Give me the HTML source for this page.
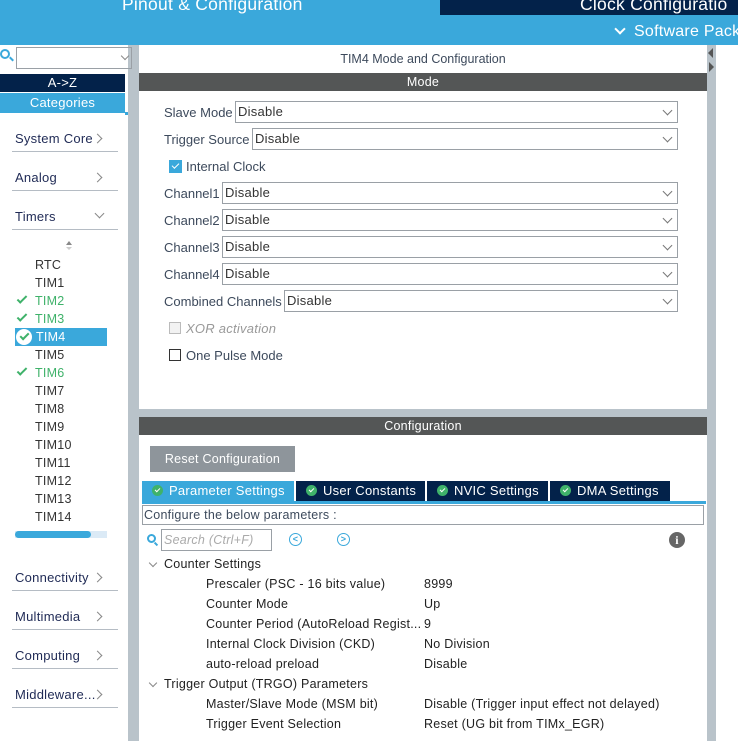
<!DOCTYPE html>
<html><head><meta charset="utf-8"><style>
*{margin:0;padding:0;box-sizing:border-box}
body{width:738px;height:741px;overflow:hidden;background:#fff;font-family:"Liberation Sans",sans-serif;font-size:13px;color:#333;position:relative;letter-spacing:0.25px}
.a{position:absolute;white-space:nowrap}
.sel{position:absolute;height:22px;border:1px solid #9aa0a6;background:#fff;padding-left:2px;line-height:20px;color:#333}
.sel:after{content:"";position:absolute;right:6px;top:5px;width:6px;height:6px;border-right:1px solid #777;border-bottom:1px solid #777;transform:rotate(45deg)}
.lbl{color:#3d4a5c;letter-spacing:0}
.nav{position:absolute;left:12px;width:106px;height:1px;background:#b5bcc4}
.navt{position:absolute;left:15px;color:#1f2a55;font-size:13px}
.chev{position:absolute;width:7px;height:7px;border-right:1px solid #888;border-bottom:1px solid #888}
.tim{position:absolute;left:35px;font-size:12.5px;color:#333}
.g{color:#3fb26a}
.ck{position:absolute;left:17px;width:10px;height:5px;border-left:2px solid #3fb26a;border-bottom:2px solid #3fb26a;transform:rotate(-45deg)}
.tab{position:absolute;top:481px;height:20px;background:#03224a;color:#fff;line-height:20px;font-size:13px;padding-left:10px}
.tab i{display:inline-block;width:11px;height:11px;border-radius:50%;background:#3fb26a;margin-right:6px;vertical-align:-1px;position:relative}
.tab i:after{content:"";position:absolute;left:3px;top:2.5px;width:4px;height:2px;border-left:1.5px solid #fff;border-bottom:1.5px solid #fff;transform:rotate(-45deg)}
.p{position:absolute;font-size:12.5px;color:#222}
</style></head><body>
<div class="a" style="left:0;top:0;width:738px;height:45px;background:#3aa8db"></div>
<div class="a" style="left:440px;top:0;width:298px;height:15px;background:#03224a"></div>
<div class="a" style="left:122px;top:-6px;color:#fff;font-size:17.5px">Pinout &amp; Configuration</div>
<div class="a" style="left:580px;top:-6px;color:#fff;font-size:17.5px">Clock Configuratio</div>
<div class="a" style="left:616px;top:25px;width:8px;height:8px;border-right:2px solid #fff;border-bottom:2px solid #fff;transform:rotate(45deg)"></div>
<div class="a" style="left:634px;top:23px;color:#fff;font-size:16px">Software Pack</div>

<div class="a" style="left:128px;top:45px;width:11px;height:696px;background:#b9c3ca"></div>
<div class="a" style="left:707px;top:45px;width:9px;height:696px;background:#b9c3ca"></div>
<div class="a" style="left:708px;top:48px;width:0;height:0;border-top:5px solid transparent;border-bottom:5px solid transparent;border-right:5px solid #555"></div>
<div class="a" style="left:709px;top:62px;width:0;height:0;border-top:5px solid transparent;border-bottom:5px solid transparent;border-left:5px solid #555"></div>
<div class="a" style="left:139px;top:409px;width:568px;height:8px;background:#b9c3ca"></div>

<div class="a" style="left:0;top:49px;width:10px;height:10px;border:2px solid #3aa8db;border-radius:50%"></div>
<div class="a" style="left:9px;top:58px;width:5px;height:2px;background:#3aa8db;transform:rotate(45deg)"></div>
<div class="a" style="left:16px;top:47px;width:116px;height:22px;border:1px solid #9aa0a6"></div>
<div class="a" style="left:122px;top:53px;width:6px;height:6px;border-right:1px solid #888;border-bottom:1px solid #888;transform:rotate(45deg)"></div>
<div class="a" style="left:0;top:74px;width:125px;height:18px;background:#03224a;color:#fff;text-align:center;line-height:18px;font-size:13px">A-&gt;Z</div>
<div class="a" style="left:0;top:93px;width:125px;height:20px;background:#3aa8db;color:#fff;text-align:center;line-height:19px;font-size:13px">Categories</div>
<div class="a" style="left:125px;top:112px;width:3px;height:3px;background:#3aa8db"></div>

<div class="navt" style="top:131px">System Core</div><div class="chev" style="left:94px;top:135px;transform:rotate(-45deg)"></div><div class="nav" style="top:151px"></div>
<div class="navt" style="top:170px">Analog</div><div class="chev" style="left:94px;top:174px;transform:rotate(-45deg)"></div><div class="nav" style="top:190px"></div>
<div class="navt" style="top:209px">Timers</div><div class="chev" style="left:96px;top:210px;transform:rotate(45deg)"></div><div class="nav" style="top:229px"></div>
<div class="a" style="left:66px;top:241px;border-left:3px solid transparent;border-right:3px solid transparent;border-bottom:4px solid #888"></div>
<div class="a" style="left:66px;top:247px;border-left:3px solid transparent;border-right:3px solid transparent;border-top:3px solid #ccc"></div>
<div class="tim" style="top:258px">RTC</div>
<div class="tim" style="top:276px">TIM1</div>
<div class="ck" style="top:296px"></div><div class="tim g" style="top:294px">TIM2</div>
<div class="ck" style="top:314px"></div><div class="tim g" style="top:312px">TIM3</div>
<div class="a" style="left:15px;top:328px;width:92px;height:18px;background:#3aa8db"></div>
<div class="a" style="left:16px;top:329px;width:16px;height:16px;border-radius:50%;background:#fff"></div>
<div class="a" style="left:20px;top:333px;width:9px;height:5px;border-left:2px solid #3fb26a;border-bottom:2px solid #3fb26a;transform:rotate(-45deg)"></div>
<div class="tim" style="top:330px;left:36px;color:#fff">TIM4</div>
<div class="tim" style="top:348px">TIM5</div>
<div class="ck" style="top:368px"></div><div class="tim g" style="top:366px">TIM6</div>
<div class="tim" style="top:384px">TIM7</div>
<div class="tim" style="top:402px">TIM8</div>
<div class="tim" style="top:420px">TIM9</div>
<div class="tim" style="top:438px">TIM10</div>
<div class="tim" style="top:456px">TIM11</div>
<div class="tim" style="top:474px">TIM12</div>
<div class="tim" style="top:492px">TIM13</div>
<div class="tim" style="top:510px">TIM14</div>
<div class="a" style="left:15px;top:531px;width:92px;height:7px;background:#dbeaf6"></div>
<div class="a" style="left:15px;top:531px;width:76px;height:7px;background:#3aa8db;border-radius:4px"></div>
<div class="navt" style="top:570px">Connectivity</div><div class="chev" style="left:94px;top:574px;transform:rotate(-45deg)"></div><div class="nav" style="top:590px"></div>
<div class="navt" style="top:609px">Multimedia</div><div class="chev" style="left:94px;top:613px;transform:rotate(-45deg)"></div><div class="nav" style="top:629px"></div>
<div class="navt" style="top:648px">Computing</div><div class="chev" style="left:94px;top:652px;transform:rotate(-45deg)"></div><div class="nav" style="top:668px"></div>
<div class="navt" style="top:687px">Middleware...</div><div class="chev" style="left:94px;top:691px;transform:rotate(-45deg)"></div><div class="nav" style="top:707px"></div>

<div class="a lbl" style="left:139px;top:52px;width:568px;text-align:center;font-size:12.5px">TIM4 Mode and Configuration</div>
<div class="a" style="left:139px;top:73px;width:568px;height:18px;background:#545656;color:#fff;text-align:center;line-height:18px;font-size:12.5px">Mode</div>
<div class="a lbl" style="left:164px;top:105px">Slave Mode</div><div class="sel" style="left:235px;top:101px;width:443px">Disable</div>
<div class="a lbl" style="left:164px;top:132px">Trigger Source</div><div class="sel" style="left:252px;top:128px;width:426px">Disable</div>
<div class="a" style="left:169px;top:160px;width:13px;height:13px;background:#3aa8db"></div>
<div class="a" style="left:172px;top:163px;width:7px;height:4px;border-left:1.5px solid #fff;border-bottom:1.5px solid #fff;transform:rotate(-45deg)"></div>
<div class="a lbl" style="left:186px;top:159px">Internal Clock</div>
<div class="a lbl" style="left:164px;top:186px">Channel1</div><div class="sel" style="left:222px;top:182px;width:456px">Disable</div>
<div class="a lbl" style="left:164px;top:213px">Channel2</div><div class="sel" style="left:222px;top:209px;width:456px">Disable</div>
<div class="a lbl" style="left:164px;top:240px">Channel3</div><div class="sel" style="left:222px;top:236px;width:456px">Disable</div>
<div class="a lbl" style="left:164px;top:267px">Channel4</div><div class="sel" style="left:222px;top:263px;width:456px">Disable</div>
<div class="a lbl" style="left:164px;top:294px">Combined Channels</div><div class="sel" style="left:284px;top:290px;width:394px">Disable</div>
<div class="a" style="left:169px;top:322px;width:12px;height:12px;border:1px solid #bbb;background:#f2f2f2"></div>
<div class="a" style="left:186px;top:321px;color:#999;font-style:italic">XOR activation</div>
<div class="a" style="left:169px;top:349px;width:12px;height:12px;border:1px solid #333"></div>
<div class="a lbl" style="left:186px;top:348px">One Pulse Mode</div>

<div class="a" style="left:139px;top:417px;width:568px;height:18px;background:#545656;color:#fff;text-align:center;line-height:18px;font-size:12.5px">Configuration</div>
<div class="a" style="left:150px;top:446px;width:145px;height:26px;background:#8e959b;color:#fff;line-height:26px;text-align:center;font-size:12.5px">Reset Configuration</div>
<div class="a" style="left:142px;top:501px;width:564px;height:3px;background:#3aa8db"></div>
<div class="tab" style="left:142px;width:152px;background:#3aa8db"><i></i>Parameter Settings</div>
<div class="tab" style="left:296px;width:129px"><i></i>User Constants</div>
<div class="tab" style="left:427px;width:121px"><i></i>NVIC Settings</div>
<div class="tab" style="left:550px;width:120px"><i></i>DMA Settings</div>
<div class="a" style="left:142px;top:505px;width:562px;height:20px;border:1px solid #9aa0a6;line-height:18px;padding-left:1px;color:#3d4a5c;font-size:12.5px">Configure the below parameters :</div>
<div class="a" style="left:147px;top:534px;width:9px;height:9px;border:2px solid #3aa8db;border-radius:50%"></div>
<div class="a" style="left:154px;top:543px;width:4px;height:2px;background:#3aa8db;transform:rotate(45deg)"></div>
<div class="a" style="left:161px;top:529px;width:111px;height:22px;border:1px solid #9aa0a6;color:#aaa;font-style:italic;line-height:20px;padding-left:2px;font-size:12.5px">Search (Ctrl+F)</div>
<div class="a" style="left:289px;top:533px;width:13px;height:13px;border:1.5px solid #3aa8db;border-radius:50%;color:#3aa8db;font-size:9px;line-height:10px;text-align:center;font-weight:bold">&lt;</div>
<div class="a" style="left:337px;top:533px;width:13px;height:13px;border:1.5px solid #3aa8db;border-radius:50%;color:#3aa8db;font-size:9px;line-height:10px;text-align:center;font-weight:bold">&gt;</div>
<div class="a" style="left:669px;top:532px;width:16px;height:16px;border-radius:50%;background:#666;color:#fff;font-size:12px;line-height:16px;text-align:center;font-weight:bold;font-family:'Liberation Serif',serif">i</div>

<div class="chev" style="left:150px;top:560px;transform:rotate(45deg);width:6px;height:6px"></div>
<div class="p" style="left:164px;top:557px">Counter Settings</div>
<div class="p" style="left:206px;top:577px">Prescaler (PSC - 16 bits value)</div><div class="p" style="left:424px;top:577px">8999</div>
<div class="p" style="left:206px;top:597px">Counter Mode</div><div class="p" style="left:424px;top:597px">Up</div>
<div class="p" style="left:206px;top:617px">Counter Period (AutoReload Regist...</div><div class="p" style="left:424px;top:617px">9</div>
<div class="p" style="left:206px;top:637px">Internal Clock Division (CKD)</div><div class="p" style="left:424px;top:637px">No Division</div>
<div class="p" style="left:206px;top:657px">auto-reload preload</div><div class="p" style="left:424px;top:657px">Disable</div>
<div class="chev" style="left:150px;top:680px;transform:rotate(45deg);width:6px;height:6px"></div>
<div class="p" style="left:164px;top:677px">Trigger Output (TRGO) Parameters</div>
<div class="p" style="left:206px;top:697px">Master/Slave Mode (MSM bit)</div><div class="p" style="left:424px;top:697px">Disable (Trigger input effect not delayed)</div>
<div class="p" style="left:206px;top:717px">Trigger Event Selection</div><div class="p" style="left:424px;top:717px">Reset (UG bit from TIMx_EGR)</div>
</body></html>
